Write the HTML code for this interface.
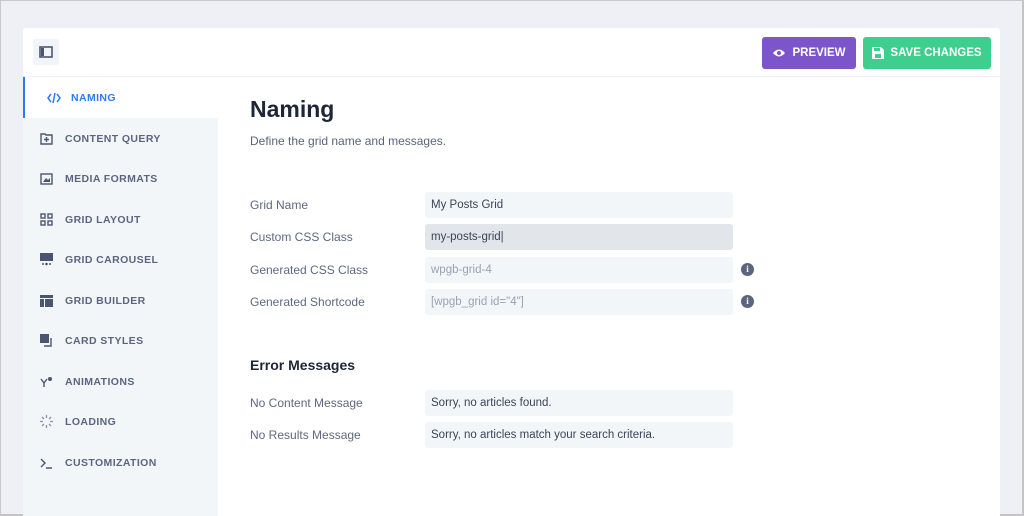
<!DOCTYPE html>
<html><head><meta charset="utf-8"><style>
*{margin:0;padding:0;box-sizing:border-box}
html,body{width:1024px;height:516px;overflow:hidden}
body{background:#eef0f5;font-family:"Liberation Sans",sans-serif;position:relative;border:1px solid #c9c9cc;border-right:2px solid #c4c4c6;border-bottom:2px solid #c4c4c6}
.card{position:absolute;left:22px;top:27px;width:977px;height:490px;background:#fff;border-radius:3px}
.hdr{position:absolute;left:0;top:0;width:977px;height:49px;border-bottom:1px solid #eef1f5}
.tog{position:absolute;left:10px;top:11px;width:26px;height:26px;background:#f1f4f8;border-radius:3px}
.btn{position:absolute;top:9px;height:32px;border-radius:3px;color:#fff;font-weight:bold;font-size:11.5px;display:flex;align-items:center;justify-content:center;gap:6px}
.side{position:absolute;left:0;top:49px;width:195px;height:441px;background:#f3f6f9}
.item{position:absolute;left:0;width:195px;height:41px;display:flex;align-items:center;font-size:10.5px;font-weight:bold;color:#5b6580;letter-spacing:.4px}
.item svg{position:absolute;left:17px}
.item span{position:absolute;left:42px}
.act{background:#fff;color:#2d7bf0;border-left:2px solid #2d7bf0}
h1{position:absolute;left:227px;top:68px;font-size:23px;color:#1d2536;font-weight:bold}
.desc{position:absolute;left:227px;top:106px;font-size:12px;color:#5b6478}
.lbl{position:absolute;left:227px;font-size:12px;color:#5e6880}
.inp{position:absolute;left:402px;width:308px;height:26px;background:#f3f6f9;border-radius:3px;font-size:11.5px;color:#3b4357;padding-left:6px;line-height:26px}
.ph{color:#9aa2b3}
.info{position:absolute;left:718px;width:13px;height:13px;border-radius:50%;background:#5b6580;color:#fff;font-size:9px;font-weight:bold;text-align:center;line-height:13px;font-family:"Liberation Serif",serif}
h2{position:absolute;left:227px;top:329px;font-size:14px;color:#1d2536;font-weight:bold}
</style></head><body>
<div class="card">
<div class="hdr">
<div class="tog"><svg width="26" height="26"><rect x="7" y="8" width="12" height="10" fill="none" stroke="#4b5570" stroke-width="1.6"/><rect x="8" y="9" width="3" height="8" fill="#4b5570"/></svg></div>
<div class="btn" style="left:739px;width:94px;background:#7b55c9"><svg width="14" height="10"><path d="M1 5Q7-2 13 5Q7 12 1 5Z" fill="#fff"/><circle cx="7" cy="5" r="2" fill="#7b55c9"/></svg>PREVIEW</div>
<div class="btn" style="left:840px;width:128px;background:#3ecf8e"><svg width="12" height="12"><path d="M0 0H9L12 3V12H0Z" fill="#fff"/><rect x="2" y="1" width="6" height="3" fill="#3ecf8e"/><rect x="3" y="7" width="6" height="4" fill="#3ecf8e"/></svg>SAVE CHANGES</div>
</div>
<div class="side">
<div class="item act" style="top:0"><svg style="left:22px" width="14" height="10"><path d="M4 1L1 5L4 9M10 1L13 5L10 9M8 0L6 10" stroke="#2d7bf0" stroke-width="1.5" fill="none"/></svg><span style="left:46px">NAMING</span></div>
<div class="item" style="top:41px"><svg width="13" height="12"><path d="M1 1H5L6 2H12V11H1Z" fill="none" stroke="#4b5570" stroke-width="1.4"/><path d="M6.5 4V9M4 6.5H9" stroke="#4b5570" stroke-width="1.4"/></svg><span>CONTENT QUERY</span></div>
<div class="item" style="top:81px"><svg width="13" height="12"><rect x="1" y="1" width="11" height="10" fill="none" stroke="#4b5570" stroke-width="1.4"/><path d="M3 9L6 5L8 7L10 5V9Z" fill="#4b5570"/></svg><span>MEDIA FORMATS</span></div>
<div class="item" style="top:122px"><svg width="13" height="13"><g fill="none" stroke="#4b5570" stroke-width="1.4"><rect x="1" y="1" width="4" height="4"/><rect x="8" y="1" width="4" height="4"/><rect x="1" y="8" width="4" height="4"/><rect x="8" y="8" width="4" height="4"/></g></svg><span>GRID LAYOUT</span></div>
<div class="item" style="top:162px"><svg width="13" height="13"><rect x="0" y="0" width="13" height="8" fill="#4b5570"/><circle cx="3" cy="11" r="1" fill="#4b5570"/><circle cx="6.5" cy="11" r="1.3" fill="#4b5570"/><circle cx="10" cy="11" r="1" fill="#4b5570"/></svg><span>GRID CAROUSEL</span></div>
<div class="item" style="top:203px"><svg width="13" height="12"><rect x="0" y="0" width="13" height="3" fill="#4b5570"/><rect x="0" y="4" width="4" height="8" fill="#4b5570"/><rect x="5" y="4" width="8" height="8" fill="#4b5570"/></svg><span>GRID BUILDER</span></div>
<div class="item" style="top:243px"><svg width="13" height="13"><rect x="0" y="0" width="9" height="9" fill="#4b5570"/><path d="M11 4V12H4" fill="none" stroke="#4b5570" stroke-width="1.4"/></svg><span>CARD STYLES</span></div>
<div class="item" style="top:284px"><svg width="13" height="12"><path d="M1 3L4 7V11M7 3L4 7" fill="none" stroke="#4b5570" stroke-width="1.4"/><circle cx="10" cy="3" r="2" fill="#4b5570"/></svg><span>ANIMATIONS</span></div>
<div class="item" style="top:324px"><svg width="13" height="13"><g stroke="#8a93a8" stroke-width="1.3"><path d="M6.5 0V3M6.5 10V13M0 6.5H3M10 6.5H13M2 2L4 4M9 9L11 11M11 2L9 4M2 11L4 9"/></g></svg><span>LOADING</span></div>
<div class="item" style="top:365px"><svg width="13" height="12"><path d="M1 2L5 6L1 10M6 11H12" fill="none" stroke="#4b5570" stroke-width="1.4"/></svg><span>CUSTOMIZATION</span></div>
</div>
<h1>Naming</h1>
<div class="desc">Define the grid name and messages.</div>
<div class="lbl" style="top:170px">Grid Name</div><div class="inp" style="top:164px">My Posts Grid</div>
<div class="lbl" style="top:202px">Custom CSS Class</div><div class="inp" style="top:196px;background:#e2e5ea">my-posts-grid|</div>
<div class="lbl" style="top:235px">Generated CSS Class</div><div class="inp ph" style="top:229px">wpgb-grid-4</div><div class="info" style="top:235px">i</div>
<div class="lbl" style="top:267px">Generated Shortcode</div><div class="inp ph" style="top:261px">[wpgb_grid id="4"]</div><div class="info" style="top:267px">i</div>
<h2>Error Messages</h2>
<div class="lbl" style="top:368px">No Content Message</div><div class="inp" style="top:362px">Sorry, no articles found.</div>
<div class="lbl" style="top:400px">No Results Message</div><div class="inp" style="top:394px">Sorry, no articles match your search criteria.</div>
</div>
</body></html>
